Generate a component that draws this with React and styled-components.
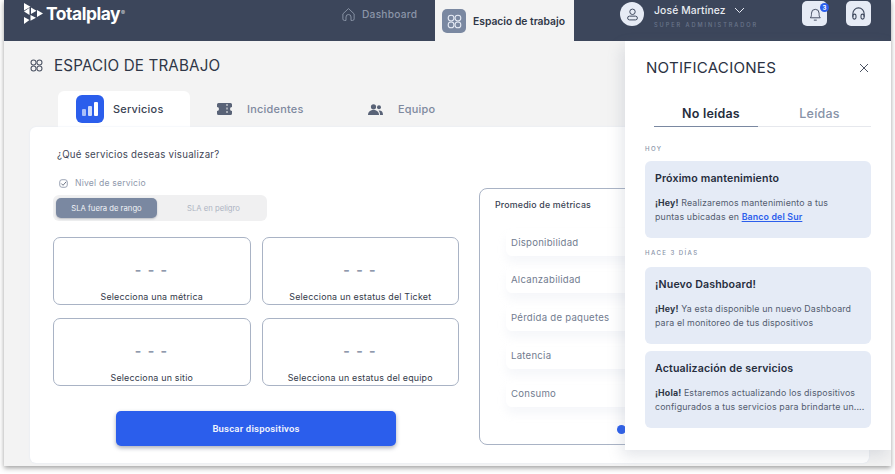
import React from "react";
import styled, { createGlobalStyle } from "styled-components";

const Global = createGlobalStyle`
  html, body { margin: 0; padding: 0; background: #fff; }
  body { font-family: Inter, "Liberation Sans", sans-serif; width: 895px; height: 474px; overflow: hidden; }
  * { box-sizing: border-box; }
`;

const Frame = styled.div`
  position: relative; width: 887px; height: 466px; margin-left: 4px; background: #f3f3f3;
  box-shadow: 0 2px 5px rgba(40,40,40,.45); display: flex; flex-direction: column; overflow: hidden;
`;
const Header = styled.header`
  height: 41px; background: #3c465b; display: flex; align-items: flex-start; flex: none;
`;
const Logo = styled.div`
  display: flex; align-items: flex-start; padding: 3px 0 0 20px; width: 337px; color: #fff;
`;
const LogoText = styled.span`
  font: 700 17.4px/22px Inter, sans-serif; letter-spacing: -.45px; margin-left: 3px;
`;
const Reg = styled.span`
  font-size: 6px; line-height: 20px; opacity: .75; margin-left: 1px;
`;
const NavItem = styled.div`
  display: flex; align-items: center; gap: 6px; width: 94px; height: 28px; color: #8b95a8;
  font: 500 10.200px Inter, sans-serif; letter-spacing: .25px;
`;
const ActiveNav = styled.div`
  width: 139px; height: 41px; background: #f3f3f3; display: flex; align-items: center; padding-left: 7px; gap: 7px;
  font: 600 10.300px Inter, sans-serif; color: #2f3747; margin-top: 0;
`;
const NavIconBox = styled.div`
  width: 24px; height: 24px; border-radius: 5px; background: #7a88a1; display: flex; align-items: center; justify-content: center; margin-top: 1px;
`;
const User = styled.div`
  display: flex; margin-left: 46px; padding-top: 2px; gap: 10px; width: 182px;
`;
const Avatar = styled.div`
  width: 24px; height: 24px; border-radius: 50%; background: #e6ebf5; display: flex; align-items: center; justify-content: center;
`;
const UserName = styled.div`
  color: #e8ebf1; font: 500 10.300px/14px Inter, sans-serif; letter-spacing: .15px; display: flex; align-items: center; gap: 8px; padding-top: 1px;
`;
const UserRole = styled.div`
  color: #6b768c; font: 500 5.600px/10px Inter, sans-serif; letter-spacing: 1.950px; margin-top: 3px;
`;
const HeadBtn = styled.div`
  position: relative; width: 25px; height: 25px; border-radius: 5px; background: #e6ebf5; margin-top: 1px; margin-right: 19px;
  display: flex; align-items: center; justify-content: center;
`;
const Badge = styled.span`
  position: absolute; right: -2px; top: 2px; width: 9px; height: 9px; border-radius: 50%; background: #2b5eec; color: #fff;
  font: 700 6px/9px Inter, sans-serif; text-align: center;
`;

const Main = styled.main`
  flex: 1; display: flex; flex-direction: column; padding: 0 22px 3px 26px; min-height: 0;
`;
const PageTitle = styled.div`
  display: flex; align-items: center; gap: 11px; height: 50px; padding-bottom: 2px; color: #2f3747; font: 400 15.200px Inter, sans-serif; letter-spacing: .15px; flex: none;
`;
const Tabs = styled.div`
  display: flex; padding-left: 28px; height: 36px; flex: none;
`;
const Tab = styled.div`
  display: flex; align-items: center; gap: 9px; height: 36px; width: ${p => p.$w}px; border-radius: 6px 6px 0 0;
  padding-left: ${p => p.$pl}px; background: ${p => (p.$active ? "#fff" : "transparent")};
  color: ${p => (p.$active ? "#3a4252" : "#7e899e")}; font: 500 10.900px Inter, sans-serif; letter-spacing: .25px;
`;
const TabIcon = styled.div`
  width: 28px; height: 28px; border-radius: 6px; background: #2b5eec; display: flex; align-items: center; justify-content: center;
`;
const PlainTabIcon = styled.svg`
  margin-right: 6px; flex: none;
`;
const Card = styled.section`
  flex: 1; background: #fff; border-radius: 6px; box-shadow: 0 0 2px #dfe6f3; display: flex; padding: 0 0 0 23px; min-height: 0;
`;
const Left = styled.div`
  width: 426px; flex: none; display: flex; flex-direction: column;
`;
const Question = styled.div`
  margin: 22px 0 0 4px; color: #3f4757; font: 400 9.700px/12px Inter, sans-serif; letter-spacing: .25px;
`;
const Check = styled.div`
  display: flex; align-items: center; gap: 7px; margin: 16px 0 0 6px; color: #8f99ac; font: 400 8.600px/12px Inter, sans-serif; letter-spacing: .2px;
`;
const Segment = styled.div`
  display: flex; width: 214px; height: 26px; margin-top: 6px; padding: 3px; border-radius: 6px; background: #f0f0f1;
`;
const SegItem = styled.div`
  flex: ${p => (p.$on ? "0 0 101px" : "1")}; height: 20px; border-radius: 5px; display: flex; align-items: center; justify-content: center;
  padding-left: ${p => (p.$on ? 0 : 6)}px;
  background: ${p => (p.$on ? "#7a88a1" : "transparent")}; color: ${p => (p.$on ? "#f1f3f7" : "#adb4c2")};
  font: 400 7.700px Inter, sans-serif; box-shadow: ${p => (p.$on ? "0 1px 2px rgba(60,70,90,.3)" : "none")};
`;
const Grid = styled.div`
  display: grid; grid-template-columns: 197.500px 197.500px; gap: 13px 11px; margin-top: 16px;
`;
const Selector = styled.div`
  height: 68px; border: 1px solid #a9b3c5; border-radius: 7px; display: flex; flex-direction: column; align-items: center; justify-content: flex-end;
`;
const Dashes = styled.div`
  color: #8f99ac; font: 700 14px/12px Inter, sans-serif; letter-spacing: 1.500px; margin-bottom: 14px;
`;
const SelLabel = styled.div`
  color: #333a49; font: 400 8.900px/14px Inter, sans-serif; letter-spacing: .2px;
`;
const SearchBtn = styled.button`
  width: 280px; height: 35px; margin: 25px 0 0 63px; border: 0; border-radius: 5px; background: #2b5eec; color: #f1f4fd;
  font: 600 9.500px Roboto, sans-serif; letter-spacing: .2px; box-shadow: 0 2px 4px rgba(40,50,80,.4); flex: none;
`;
const Metrics = styled.div`
  position: relative; width: 362px; height: 257px; margin-top: 61px; border: 1px solid #a9b3c5; border-radius: 8px; padding: 10px 15px 0;
`;
const MetricTitle = styled.div`
  color: #3a4252; font: 500 8.800px/12px Inter, sans-serif; letter-spacing: .2px;
`;
const MetricRows = styled.div`
  display: flex; flex-direction: column; gap: 10.800px; margin-top: 17.500px; padding-left: 11px;
`;
const MetricRow = styled.div`
  height: 27px; border-radius: 6px; padding-left: 5px; display: flex; align-items: center; color: #727c8f;
  font: 400 9.600px Inter, sans-serif; letter-spacing: .25px; box-shadow: 0 7px 10px rgba(190,200,220,.14);
`;
const Dot = styled.span`
  position: absolute; left: 137px; top: 236px; width: 9px; height: 9px; border-radius: 50%; background: #2b5eec;
`;
const Panel = styled.aside`
  position: absolute; right: 0; top: 41px; width: 266px; height: 409px; background: #fff; padding: 0 20px 0 20px;
  box-shadow: -3px 6px 14px rgba(120,130,150,.2);
`;
const PanelHead = styled.div`
  display: flex; justify-content: space-between; align-items: center; height: 53px; padding: 0 2px 0 1px; color: #2b3242; font: 400 15.100px Inter, sans-serif; letter-spacing: .25px;
`;
const PanelTabs = styled.div`
  display: flex; margin: 8px 0 0 9px; width: 217px; height: 24.500px; border-bottom: 1px solid #e6e8ed;
`;
const PanelTab = styled.div`
  width: ${p => p.$w}px; height: 24.500px; padding-left: 10px; text-align: center; font: ${p => (p.$on ? 600 : 500)} 12.500px/24px Inter, sans-serif; letter-spacing: .2px;
  color: ${p => (p.$on ? "#262d3d" : "#8792a7")}; border-bottom: ${p => (p.$on ? "1.5px solid #7a88a1" : "0")};
`;
const Stamp = styled.div`
  color: #8893a8; font: 500 6.100px/8px Inter, sans-serif; letter-spacing: 1.400px;
  margin-top: ${p => p.$mt}px; margin-bottom: ${p => p.$mb}px;
`;
const Note = styled.div`
  width: 226px; height: 77px; border-radius: 6px; background: #e5ebf6; padding: 11px 10px 0; margin-bottom: 7px;
`;
const NoteTitle = styled.div`
  color: #262d3d; font: 600 10.600px/13px Inter, sans-serif; letter-spacing: .15px;
`;
const NoteBody = styled.div`
  margin-top: 11px; color: #545d70; font: 400 8.800px/14.500px Inter, sans-serif; letter-spacing: .15px; white-space: nowrap;
  b { color: #2f3747; font-weight: 700; }
`;
const NoteLink = styled.span`
  color: #2b5eec; font-weight: 600; text-decoration: underline;
`;

const Flower = ({ c, s = 14, w = 1.1 }) => (
  <svg width={s} height={s} viewBox="0 0 14 14" fill="none" stroke={c} strokeWidth={w}>
    <circle cx="3.800" cy="3.800" r="2.700" /><circle cx="10.200" cy="3.800" r="2.700" />
    <circle cx="3.800" cy="10.200" r="2.700" /><circle cx="10.200" cy="10.200" r="2.700" />
  </svg>
);

const selectors = ["Selecciona una métrica", "Selecciona un estatus del Ticket", "Selecciona un sitio", "Selecciona un estatus del equipo"];
const metrics = ["Disponibilidad", "Alcanzabilidad", "Pérdida de paquetes", "Latencia", "Consumo"];

export default function App() {
  return (
    <Frame>
      <Global />
      <Header>
        <Logo>
          <svg width="19" height="21" viewBox="0 0 19 21" fill="#fff">
            <path d="M0 0l6.500 3.800L0 7.500zM0 8.500l5.500-3.800v7.400zM7 4.500l5.500 3.200L7 11zM13 7l6 3.500-6 3.500zM6.500 12l5.500 2.800-5.500 3zM0 14l5.500 3L0 21z" />
          </svg>
          <LogoText>Totalplay</LogoText><Reg>®</Reg>
        </Logo>
        <NavItem>
          <svg width="15" height="15" viewBox="0 0 24 24" fill="none" stroke="#8b95a8" strokeWidth="1.500">
            <path d="M3 11l9-8.500L21 11v8a2.500 2.500 0 0 1-2.500 2.500H16V16a4 4 0 0 0-8 0v5.500H5.500A2.500 2.500 0 0 1 3 19z" />
          </svg>
          Dashboard
        </NavItem>
        <ActiveNav>
          <NavIconBox><Flower c="#e6ebf5" s={15} w={1} /></NavIconBox>
          Espacio de trabajo
        </ActiveNav>
        <User>
          <Avatar>
            <svg width="13" height="13" viewBox="0 0 24 24" fill="none" stroke="#3c465b" strokeWidth="1.800">
              <circle cx="12" cy="7" r="5" /><rect x="3" y="15" width="18" height="7" rx="3.500" />
            </svg>
          </Avatar>
          <div>
            <UserName>
              José Martínez
              <svg width="11" height="7" viewBox="0 0 11 7" fill="none" stroke="#e6ebf5" strokeWidth="1"><path d="M1 1l4.500 4.500L10 1" /></svg>
            </UserName>
            <UserRole>SUPER ADMINISTRADOR</UserRole>
          </div>
        </User>
        <HeadBtn>
          <svg width="14" height="16" viewBox="0 0 24 27" fill="none" stroke="#3c465b" strokeWidth="1.600">
            <path d="M4 20c2-2 2-5 2-8a6.500 6.500 0 0 1 13 0c0 3 0 6 2 8z" /><path d="M10 24h5" />
          </svg>
          <Badge>3</Badge>
        </HeadBtn>
        <HeadBtn>
          <svg width="15" height="15" viewBox="0 0 24 24" fill="none" stroke="#3c465b" strokeWidth="1.700">
            <path d="M3 17v-5a9 9 0 0 1 18 0v5" /><rect x="3" y="13" width="5" height="8" rx="2.500" /><rect x="16" y="13" width="5" height="8" rx="2.500" />
          </svg>
        </HeadBtn>
      </Header>
      <Main>
        <PageTitle>
          <Flower c="#4b5363" s={13} w={1.100} />
          ESPACIO DE TRABAJO
        </PageTitle>
        <Tabs>
          <Tab $active $w={132} $pl={18}>
            <TabIcon>
              <svg width="16" height="14" viewBox="0 0 16 14">
                <rect x="0" y="7" width="4" height="7" rx="1" fill="#a9bff8" />
                <rect x="6" y="4" width="4" height="10" rx="1" fill="#cddafb" />
                <rect x="12" y="0" width="4" height="14" rx="1" fill="#fff" />
              </svg>
            </TabIcon>
            Servicios
          </Tab>
          <Tab $w={178} $pl={27}>
            <PlainTabIcon width="15" height="12" viewBox="0 0 15 12">
              <path fill="#596377" d="M1.500 0h12A1.500 1.500 0 0 1 15 1.500V4a2 2 0 0 0 0 4v2.500A1.500 1.500 0 0 1 13.500 12h-12A1.500 1.500 0 0 1 0 10.500V8a2 2 0 0 0 0-4V1.500A1.500 1.500 0 0 1 1.500 0z" />
              <path stroke="#f3f3f3" strokeWidth="1" strokeDasharray="2 1.500" d="M10 1v10" />
            </PlainTabIcon>
            Incidentes
          </Tab>
          <Tab $w={100} $pl={0}>
            <PlainTabIcon width="15" height="11" viewBox="0 0 15 11" fill="#596377">
              <circle cx="5.500" cy="2.800" r="2.600" /><path d="M0 11c0-3.500 2.500-5 5.500-5s5.500 1.500 5.500 5z" />
              <circle cx="11" cy="3.300" r="2" /><path d="M11.500 6.500c2 0 3.500 1.300 3.500 4.500h-3c0-2-.3-3.300-1.500-4.300z" />
            </PlainTabIcon>
            Equipo
          </Tab>
        </Tabs>
        <Card>
          <Left>
            <Question>¿Qué servicios deseas visualizar?</Question>
            <Check>
              <svg width="9" height="9" viewBox="0 0 10 10" fill="none" stroke="#5d6779" strokeWidth="1">
                <rect x=".8" y=".8" width="8.400" height="8.400" rx="2.500" stroke="#8f99ac" /><path d="M2.500 5l2 2 3.500-4" />
              </svg>
              Nivel de servicio
            </Check>
            <Segment>
              <SegItem $on>SLA fuera de rango</SegItem>
              <SegItem>SLA en peligro</SegItem>
            </Segment>
            <Grid>
              {selectors.map(s => (
                <Selector key={s}>
                  <Dashes>- - -</Dashes>
                  <SelLabel>{s}</SelLabel>
                </Selector>
              ))}
            </Grid>
            <SearchBtn>Buscar dispositivos</SearchBtn>
          </Left>
          <Metrics>
            <MetricTitle>Promedio de métricas</MetricTitle>
            <MetricRows>
              {metrics.map(m => <MetricRow key={m}>{m}</MetricRow>)}
            </MetricRows>
            <Dot />
          </Metrics>
        </Card>
      </Main>
      <Panel>
        <PanelHead>
          NOTIFICACIONES
          <svg width="10" height="10" viewBox="0 0 10 10" stroke="#4b5363" strokeWidth="1"><path d="M1 1l8 8M9 1l-8 8" /></svg>
        </PanelHead>
        <PanelTabs>
          <PanelTab $on $w={104}>No leídas</PanelTab>
          <PanelTab $w={113}>Leídas</PanelTab>
        </PanelTabs>
        <Stamp $mt={18} $mb={8}>HOY</Stamp>
        <Note>
          <NoteTitle>Próximo mantenimiento</NoteTitle>
          <NoteBody><b>¡Hey!</b> Realizaremos mantenimiento a tus<br />puntas ubicadas en <NoteLink>Banco del Sur</NoteLink></NoteBody>
        </Note>
        <Stamp $mt={11} $mb={10}>HACE 3 DÍAS</Stamp>
        <Note>
          <NoteTitle>¡Nuevo Dashboard!</NoteTitle>
          <NoteBody><b>¡Hey!</b> Ya esta disponible un nuevo Dashboard<br />para el monitoreo de tus dispositivos</NoteBody>
        </Note>
        <Note>
          <NoteTitle>Actualización de servicios</NoteTitle>
          <NoteBody><b>¡Hola!</b> Estaremos actualizando los dispositivos<br />configurados a tus servicios para brindarte un....</NoteBody>
        </Note>
      </Panel>
    </Frame>
  );
}
